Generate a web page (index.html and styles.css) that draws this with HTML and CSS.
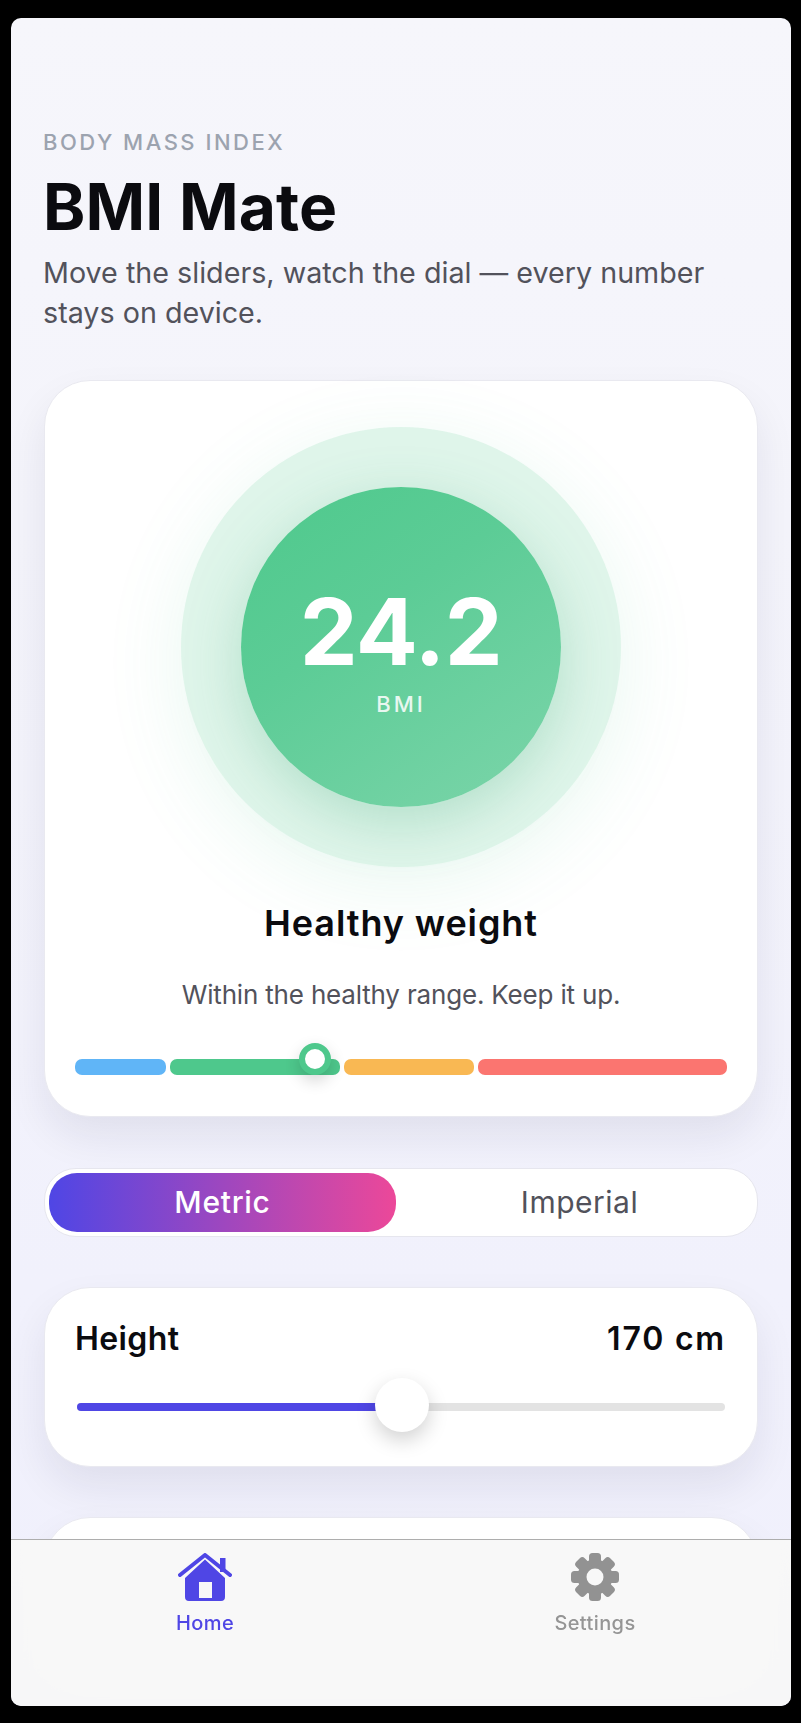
FILE: index.html
```html
<!DOCTYPE html>
<html lang="en">
<head>
<meta charset="utf-8">
<title>BMI Mate</title>
<link rel="stylesheet" href="styles.css">
</head>
<body>
<div class="screen">
  <main class="content">
    <p class="eyebrow">BODY MASS INDEX</p>
    <h1 class="title">BMI Mate</h1>
    <p class="subtitle">Move the sliders, watch the dial — every number stays on device.</p>

    <section class="card result">
      <div class="halo">
        <div class="dial">
          <span class="dial-value">24.2</span>
          <span class="dial-label">BMI</span>
        </div>
      </div>
      <h2 class="status">Healthy weight</h2>
      <p class="advice">Within the healthy range. Keep it up.</p>
      <div class="scale">
        <span class="seg seg-under"></span>
        <span class="seg seg-healthy"></span>
        <span class="seg seg-over"></span>
        <span class="seg seg-obese"></span>
        <span class="marker"></span>
      </div>
    </section>

    <div class="toggle">
      <span class="toggle-item toggle-on">Metric</span>
      <span class="toggle-item">Imperial</span>
    </div>

    <section class="card slider-card">
      <div class="slider-head">
        <span class="slider-name">Height</span>
        <span class="slider-value">170 cm</span>
      </div>
      <div class="slider">
        <div class="slider-fill"></div>
        <div class="slider-thumb"></div>
      </div>
    </section>

    <section class="card slider-card"></section>
  </main>

  <nav class="tabbar">
    <div class="tab tab-on">
      <svg class="tab-icon" viewBox="0 0 54 48" aria-hidden="true">
        <path class="home-body" fill-rule="evenodd" d="M27 6.5 47 25v19a4 4 0 0 1-4 4H11a4 4 0 0 1-4-4V25ZM21 29v16h13V29Z"/>
        <path class="home-roof" d="M2 22 27 2l25 20"/>
        <rect class="home-chimney" x="42" y="5" width="5.5" height="14"/>
      </svg>
      <span class="tab-label">Home</span>
    </div>
    <div class="tab">
      <svg class="tab-icon" viewBox="0 0 48 48" aria-hidden="true">
        <defs>
          <mask id="gear-hole">
            <rect width="48" height="48" fill="#fff"/>
            <circle cx="24" cy="24" r="8.5" fill="#000"/>
          </mask>
        </defs>
        <g class="gear" mask="url(#gear-hole)">
          <circle cx="24" cy="24" r="17.5"/>
          <rect x="18" y="0" width="12" height="48" rx="3.5"/>
          <rect x="18" y="0" width="12" height="48" rx="3.5" transform="rotate(45 24 24)"/>
          <rect x="18" y="0" width="12" height="48" rx="3.5" transform="rotate(90 24 24)"/>
          <rect x="18" y="0" width="12" height="48" rx="3.5" transform="rotate(135 24 24)"/>
        </g>
      </svg>
      <span class="tab-label">Settings</span>
    </div>
  </nav>
</div>
</body>
</html>
```
FILE: styles.css
```css
* { box-sizing: border-box; }
html, body { margin: 0; height: 100%; }
body {
  background: #000;
  font-family: Inter, "Noto Sans", sans-serif;
  padding: 18px 10px 17px 11px;
  height: 1723px;
  overflow: hidden;
}
.screen {
  position: relative;
  height: 1688px;
  border-radius: 10px;
  overflow: hidden;
  background: linear-gradient(180deg, #f6f6fb 0%, #f4f4fb 30%, #f1f1fc 75%, #f0f0fc 100%);
}
.content { padding: 111px 33px 0; display: flex; flex-direction: column; }
.eyebrow {
  margin: 0 0 0 -1px;
  font-size: 22px;
  line-height: 26px;
  font-weight: 500;
  letter-spacing: 2.5px;
  color: #9ca3af;
}
.title {
  margin: 14px 0 0 -1px;
  font-size: 64px;
  line-height: 76px;
  font-weight: 700;
  letter-spacing: 0.2px;
  color: #0b0b0f;
}
.subtitle {
  margin: 8px 0 0 -1px;
  font-size: 28.7px;
  line-height: 40px;
  color: #52525b;
}
.card {
  background: #fff;
  border: 1px solid #e9e9f0;
  border-radius: 46px;
  box-shadow: 0 20px 40px rgba(20, 20, 60, 0.08);
}
.result { margin-top: 47px; padding: 46px 30px 41px; display: flex; flex-direction: column; align-items: center; }
.halo {
  width: 440px;
  height: 440px;
  border-radius: 50%;
  display: flex;
  align-items: center;
  justify-content: center;
  background: rgba(78, 200, 140, 0.18);
  box-shadow: 0 16px 80px rgba(78, 200, 140, 0.12);
}
.dial {
  width: 320px;
  height: 320px;
  border-radius: 50%;
  display: flex;
  flex-direction: column;
  align-items: center;
  justify-content: center;
  background: linear-gradient(145deg, #4ec98c 0%, #5ccc96 40%, #7cd5aa 100%);
  box-shadow: 0 16px 56px rgba(60, 170, 120, 0.28);
  color: #fff;
  padding-top: 5px;
}
.dial-value { font-size: 92px; line-height: 100px; font-weight: 700; letter-spacing: -0.4px; }
.dial-label { font-size: 22px; line-height: 28px; font-weight: 500; letter-spacing: 3px; opacity: 0.85; margin-top: 8px; }
.status {
  margin: 34px 0 0;
  font-size: 36px;
  line-height: 44px;
  font-weight: 600;
  letter-spacing: 0.9px;
  color: #0b0b0f;
}
.advice { margin: 32px 0 0; font-size: 26px; line-height: 36px; letter-spacing: -0.18px; color: #52525b; }
.scale { position: relative; align-self: stretch; margin-top: 46px; display: flex; gap: 4px; height: 16px; }
.seg { height: 16px; border-radius: 7px; }
.seg-under { flex: 91; background: #60b5f7; }
.seg-healthy { flex: 170; background: #4ec88c; }
.seg-over { flex: 130; background: #f9b853; }
.seg-obese { flex: 249; background: #fb7570; }
.marker {
  position: absolute;
  left: 224px;
  top: -16px;
  width: 32px;
  height: 32px;
  border-radius: 50%;
  background: #fff;
  border: 6px solid #4ec88c;
  box-shadow: 0 6px 16px rgba(0, 0, 0, 0.16);
}
.toggle {
  margin-top: 51px;
  height: 69px;
  padding: 4px;
  display: flex;
  gap: 10px;
  background: #fff;
  border: 1px solid #e6e6ee;
  border-radius: 32px;
}
.toggle-item {
  flex: 1;
  display: flex;
  align-items: center;
  justify-content: center;
  border-radius: 28px;
  padding-bottom: 2px;
  font-size: 30px;
  font-weight: 400;
  letter-spacing: 0.5px;
  color: #52525b;
}
.toggle-on { background: linear-gradient(90deg, #4f46e5, #ec4899); color: #fff; font-weight: 500; letter-spacing: 0.7px; }
.slider-card { margin-top: 50px; height: 180px; padding: 31px 30px 0; }
.slider-head { display: flex; justify-content: space-between; align-items: baseline; padding-right: 1px; }
.slider-name, .slider-value { font-size: 32px; line-height: 40px; font-weight: 600; color: #0b0b0f; }
.slider-name { letter-spacing: 0.4px; }
.slider-value { letter-spacing: 1.8px; }
.slider { position: relative; margin: 44px 2px 0 2px; height: 8px; border-radius: 4px; background: #e3e3e3; }
.slider-fill { width: 50%; height: 8px; border-radius: 4px; background: #4f46e5; }
.slider-thumb {
  position: absolute;
  left: 298px;
  top: -25px;
  width: 54px;
  height: 54px;
  border-radius: 50%;
  background: #fff;
  box-shadow: 0 8px 20px rgba(0, 0, 0, 0.18);
}
.tabbar {
  position: absolute;
  left: 0;
  right: 0;
  bottom: 0;
  height: 167px;
  padding-top: 13px;
  display: flex;
  background: rgba(248, 248, 248, 0.94);
  backdrop-filter: blur(20px);
  border-top: 1px solid #adadad;
}
.tab { flex: 1; display: flex; flex-direction: column; align-items: center; padding-right: 2px; color: #959595; }
.tab-on { color: #4f46e5; }
.tab-icon { height: 48px; display: block; }
.home-body { fill: #4f46e5; }
.home-roof { fill: none; stroke: #4f46e5; stroke-width: 4; stroke-linecap: round; stroke-linejoin: round; }
.home-chimney { fill: #4f46e5; }
.gear { fill: #929292; }
.tab-label { margin-top: 10px; font-size: 20px; line-height: 24px; font-weight: 500; letter-spacing: 0.4px; }
```
